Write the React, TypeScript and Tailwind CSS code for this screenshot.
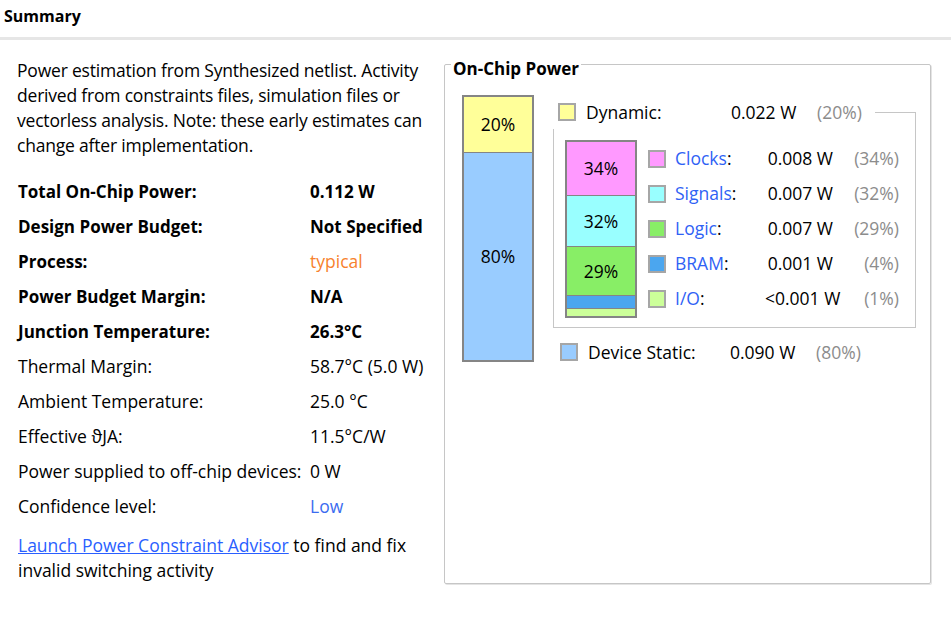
import React from "react";

const rows: { label: string; value: string; bold?: boolean; color?: string }[] = [
  { label: "Total On-Chip Power:", value: "0.112 W", bold: true },
  { label: "Design Power Budget:", value: "Not Specified", bold: true },
  { label: "Process:", value: "typical", bold: true, color: "text-[#f7822d]" },
  { label: "Power Budget Margin:", value: "N/A", bold: true },
  { label: "Junction Temperature:", value: "26.3°C", bold: true },
  { label: "Thermal Margin:", value: "58.7°C (5.0 W)" },
  { label: "Ambient Temperature:", value: "25.0 °C" },
  { label: "Effective ϑJA:", value: "11.5°C/W" },
  { label: "Power supplied to off-chip devices:", value: "0 W" },
  { label: "Confidence level:", value: "Low", color: "text-[#3b6cf0]" },
];

const legend = [
  { name: "Clocks", value: "0.008 W", pct: "(34%)", color: "bg-[#ff99ff]" },
  { name: "Signals", value: "0.007 W", pct: "(32%)", color: "bg-[#99ffff]" },
  { name: "Logic", value: "0.007 W", pct: "(29%)", color: "bg-[#88ee66]" },
  { name: "BRAM", value: "0.001 W", pct: "(4%)", color: "bg-[#4ba6ef]" },
  { name: "I/O", value: "<0.001 W", pct: "(1%)", color: "bg-[#ccff99]" },
];

function Swatch({ color }: { color: string }) {
  return <div className={`w-[18px] h-[18px] border-2 border-[#a6a6a6] shrink-0 ${color}`} />;
}

export default function App() {
  return (
    <div className="w-[951px] h-[624px] bg-white text-black font-['Open_Sans',sans-serif] text-[17.5px] overflow-hidden">
      <div className="h-[37px] flex items-center px-[4px] pb-[5px] font-bold text-[16px]">Summary</div>
      <div className="h-[3px] bg-[#e6e6e6]" />
      <div className="flex">
        <div className="w-[444px] shrink-0 pl-[17px] pt-[18px]">
          <p className="leading-[25px] whitespace-nowrap tracking-[-0.2px]">
            Power estimation from Synthesized netlist. Activity
            <br />
            derived from constraints files, simulation files or
            <br />
            vectorless analysis. Note: these early estimates can
            <br />
            change after implementation.
          </p>
          <div className="mt-[16px] pl-[1px]">
            {rows.map((r) => (
              <div key={r.label} className="flex items-center h-[35px]">
                <div className={`w-[292px] whitespace-nowrap ${r.bold ? "font-bold text-[17px]" : ""}`}>{r.label}</div>
                <div className={`${r.bold && !r.color ? "font-bold text-[17px]" : ""} ${r.color ?? ""}`}>{r.value}</div>
              </div>
            ))}
          </div>
          <p className="leading-[25px] mt-[9px] pl-[1px] whitespace-nowrap">
            <span className="text-[#2a5fff] underline">Launch Power Constraint Advisor</span> to find and fix
            <br />
            invalid switching activity
          </p>
        </div>
        <div className="relative mt-[24px] w-[487px] h-[520px] border border-[#c6c6c6] rounded-[2px] shadow-[1px_1px_0_#e4e4e4]">
          <div className="absolute left-[6px] -top-[7px] bg-white px-[2px] font-bold text-[17px] leading-[22px]">On-Chip Power</div>
          <div className="flex pl-[17px] pt-[30px]">
            <div className="w-[72px] h-[267px] border-2 border-[#858585] flex flex-col shrink-0">
              <div className="h-[55px] bg-[#ffff99] flex items-center justify-center">20%</div>
              <div className="flex-1 bg-[#99ccff] border-t border-[#858585] flex items-center justify-center">80%</div>
            </div>
            <div className="relative ml-[19px] w-[363px]">
              <div className="flex items-center h-[18px] mt-[8px]">
                <div className="w-[33px] pl-[5px]"><Swatch color="bg-[#ffff99]" /></div>
                <div className="w-[145px]">Dynamic:</div>
                <div className="w-[86px]">0.022 W</div>
                <div className="text-[#8c8c8c]">(20%)</div>
              </div>
              <div className="absolute left-[322px] top-[17px] w-[41px] h-[18px] border-t border-r border-[#c6c6c6]" />
              <div className="mt-[8px] h-[199px] border-l border-r border-b border-[#c6c6c6] pl-[11px] pt-[11px] flex">
                <div className="w-[72px] h-[178px] border-2 border-[#858585] flex flex-col shrink-0">
                  <div className="h-[53px] bg-[#ff99ff] flex items-center justify-center">34%</div>
                  <div className="h-[51px] bg-[#99ffff] border-t border-[#858585] flex items-center justify-center">32%</div>
                  <div className="h-[49px] bg-[#88ee66] border-t border-[#858585] flex items-center justify-center">29%</div>
                  <div className="h-[13px] bg-[#4ba6ef] border-t border-[#858585]" />
                  <div className="flex-1 bg-[#ccff99] border-t border-[#858585]" />
                </div>
                <div className="ml-[11px] pt-[1px]">
                  {legend.map((l) => (
                    <div key={l.name} className="flex items-center h-[35px]">
                      <Swatch color={l.color} />
                      <div className="w-[99px] pl-[9px] whitespace-nowrap">
                        <span className="text-[#2f62f5]">{l.name}</span>:
                      </div>
                      <div className="w-[68px] text-right whitespace-nowrap">{l.value}</div>
                      <div className="w-[66px] text-right text-[#8c8c8c]">{l.pct}</div>
                    </div>
                  ))}
                </div>
              </div>
              <div className="flex items-center h-[18px] mt-[15px]">
                <div className="w-[35px] pl-[7px]"><Swatch color="bg-[#99ccff]" /></div>
                <div className="w-[142px]">Device Static:</div>
                <div className="w-[86px]">0.090 W</div>
                <div className="text-[#8c8c8c]">(80%)</div>
              </div>
            </div>
          </div>
        </div>
      </div>
    </div>
  );
}
